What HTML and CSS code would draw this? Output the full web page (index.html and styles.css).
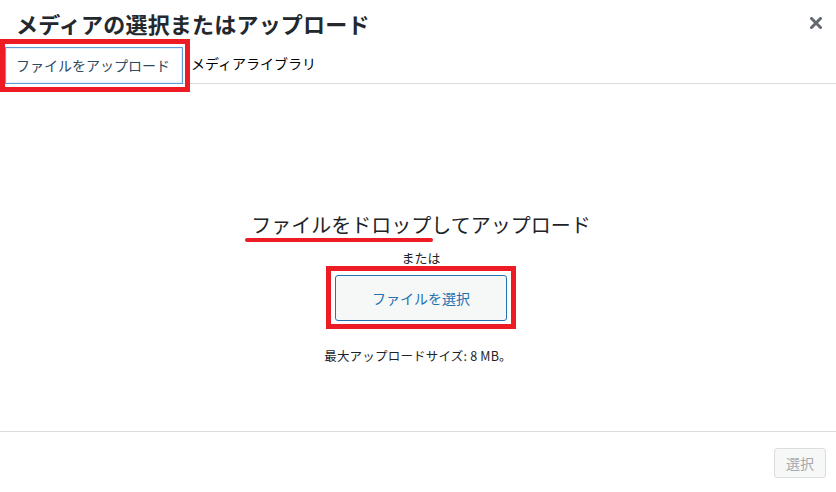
FILE: index.html
```html
<!DOCTYPE html>
<html lang="ja">
<head>
<meta charset="utf-8">
<title>メディアの選択またはアップロード</title>
<link rel="stylesheet" href="styles.css">
</head>
<body>
<div class="modal">
  <header class="head">
    <h1 class="title">メディアの選択またはアップロード</h1>
    <button class="close" aria-label="閉じる">
      <svg width="12" height="12" viewBox="0 0 12 12"><path d="M1.5 1.5L10.5 10.5M10.5 1.5L1.5 10.5" stroke="#646970" stroke-width="3" stroke-linecap="square"/></svg>
    </button>
  </header>
  <nav class="tabs">
    <span class="tab active">ファイルをアップロード</span>
    <span class="tab">メディアライブラリ</span>
  </nav>
  <main class="content">
    <h2 class="drop">ファイルをドロップしてアップロード</h2>
    <p class="or">または</p>
    <button class="pick">ファイルを選択</button>
    <p class="max">最大アップロードサイズ: 8 MB。</p>
  </main>
  <footer class="foot">
    <button class="select">選択</button>
  </footer>
</div>
<div class="mark mark-tab"></div>
<div class="mark mark-btn"></div>
<div class="underline"></div>
</body>
</html>
```
FILE: styles.css
```css
* { box-sizing: border-box; }
html, body { margin: 0; padding: 0; background: #fff; }
body {
  width: 836px;
  height: 492px;
  overflow: hidden;
  position: relative;
  font-family: "Noto Sans CJK JP", "Noto Sans", sans-serif;
  color: #1d2327;
}
.modal { display: flex; flex-direction: column; height: 492px; }
.head {
  height: 46px;
  display: flex;
  align-items: center;
  justify-content: space-between;
  padding: 0 14px 0 16px;
}
.title {
  margin: 0;
  font-size: 22px;
  font-weight: 700;
  line-height: 46px;
  color: #23282d;
  letter-spacing: 0.2px;
}
.close {
  border: 0;
  background: none;
  padding: 0;
  width: 12px;
  height: 12px;
  display: flex;
}
.tabs {
  height: 38px;
  display: flex;
  align-items: flex-start;
  border-bottom: 1px solid #dcdcde;
  padding-left: 5px;
  gap: 8px;
}
.tab {
  font-size: 14px;
  line-height: 35px;
  color: #000;
}
.tab.active {
  margin-top: 1px;
  height: 37px;
  padding: 0 12px 0 10px;
  border: 1px solid #5b9dd9;
  box-shadow: inset 0 0 0 1px #e6f0f8;
  color: #2c4a62;
  background: #fff;
  position: relative;
}
.content {
  flex: 1;
  display: flex;
  flex-direction: column;
  align-items: center;
  padding-top: 127px;
  padding-left: 6px;
}
.drop {
  margin: 0;
  font-size: 20px;
  font-weight: 400;
  line-height: 28px;
  color: #1d2327;
}
.or {
  margin: 9px 0 0;
  font-size: 13px;
  line-height: 20px;
}
.pick {
  margin-top: 7px;
  width: 172px;
  height: 46px;
  border: 1px solid #2271b1;
  border-radius: 3px;
  background: #f6f7f7;
  color: #2271b1;
  font-family: inherit;
  font-size: 14px;
}
.max {
  margin: 26px 0 0 -6px;
  font-size: 12.5px;
  line-height: 18px;
  letter-spacing: 0.2px;
}
.foot {
  height: 61px;
  border-top: 1px solid #dcdcde;
  display: flex;
  justify-content: flex-end;
  align-items: flex-start;
  padding: 16px 10px 0 0;
}
.select {
  width: 52px;
  height: 30px;
  border: 1px solid #dcdcde;
  border-radius: 3px;
  background: #f6f7f7;
  color: #a7aaad;
  font-family: inherit;
  font-size: 14px;
}
.mark {
  position: absolute;
  border: 5px solid #ed1c24;
}
.mark-tab { left: 0; top: 39px; width: 190px; height: 53px; }
.mark-btn { left: 326px; top: 266px; width: 190px; height: 63px; }
.underline {
  position: absolute;
  left: 245px;
  top: 238px;
  width: 188px;
  height: 4px;
  border-radius: 2px;
  background: #ed1c24;
}
```
